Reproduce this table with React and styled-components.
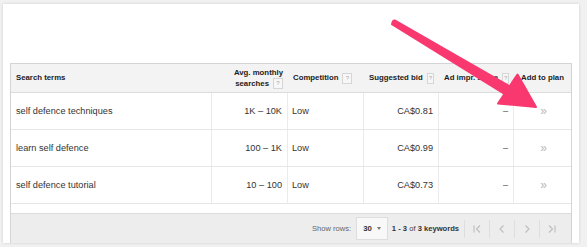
import React from "react";
import styled, { createGlobalStyle } from "styled-components";

const GlobalStyle = createGlobalStyle`
  body {
    margin: 0;
    background: #f1f1f1;
    font-family: "Liberation Sans", Arial, sans-serif;
  }
`;

const Page = styled.div`
  position: relative;
  width: 587px;
  height: 247px;
  padding: 4px 8px 4px 3px;
  box-sizing: border-box;
`;

const Card = styled.div`
  background: #ffffff;
  height: 100%;
  box-sizing: border-box;
  padding: 59px 7px 0 7px;
  box-shadow: 0 0 3px rgba(0, 0, 0, 0.14);
`;

const Table = styled.div`
  border: 1px solid #d4d4d4;
  border-bottom: none;
`;

const COLS = "201px 76px 76px 75px 75px 1fr";

const HeadRow = styled.div`
  display: grid;
  grid-template-columns: ${COLS};
  height: 28px;
  background: #f3f3f3;
  border-bottom: 1px solid #dcdcdc;
`;

const HeadCell = styled.div`
  display: flex;
  align-items: center;
  justify-content: ${(p) =>
    p.$align === "right" ? "flex-end" : p.$align === "center" ? "center" : "flex-start"};
  text-align: ${(p) => p.$align || "left"};
  padding: 0 5px;
  font-size: 7.8px;
  font-weight: bold;
  color: #222;
  line-height: 10px;
  white-space: nowrap;
`;

const Help = styled.span`
  display: inline-flex;
  align-items: center;
  justify-content: center;
  width: 8px;
  height: 9px;
  margin-left: 4px;
  border: 1px solid #d6d6d6;
  background: #f7f7f7;
  color: #aaa;
  font-size: 6px;
  font-weight: normal;
  vertical-align: middle;
`;

const Row = styled.div`
  display: grid;
  grid-template-columns: ${COLS};
  height: 36px;
  border-bottom: 1px solid #e6e6e6;
`;

const Cell = styled.div`
  display: flex;
  align-items: center;
  justify-content: ${(p) =>
    p.$align === "right" ? "flex-end" : p.$align === "center" ? "center" : "flex-start"};
  padding: 0 ${(p) => (p.$align === "right" ? "5px" : "4px")} 0 ${(p) => (p.$first ? "5px" : "4px")};
  font-size: 9.2px;
  color: ${(p) => p.$muted || "#333"};
  border-right: ${(p) => (p.$last ? "none" : "1px solid #ebebeb")};
`;

const Plan = styled.span`
  color: #b8b8b8;
  font-size: 12px;
  margin-left: 2px;
`;

const Spacer = styled.div`
  height: 9px;
`;

const Footer = styled.div`
  display: flex;
  align-items: center;
  justify-content: flex-end;
  height: 29px;
  background: #ededed;
  border-top: 1px solid #dcdcdc;
  padding-right: 7px;
  font-size: 7.6px;
  color: #666;
`;

const Select = styled.div`
  display: flex;
  align-items: center;
  gap: 5px;
  height: 21px;
  margin: 0 4px 0 5px;
  padding: 0 6px;
  background: #f8f8f8;
  border: 1px solid #dedede;
  color: #333;
  font-weight: bold;
  font-size: 7.8px;
`;

const Caret = styled.span`
  width: 0;
  height: 0;
  border-left: 2.5px solid transparent;
  border-right: 2.5px solid transparent;
  border-top: 3px solid #777;
`;

const Range = styled.span`
  color: #444;
  margin-right: 5px;
  b {
    color: #333;
  }
`;

const Pager = styled.div`
  display: flex;
  align-items: center;
`;

const PageButton = styled.div`
  width: 24px;
  height: 18px;
  display: flex;
  align-items: center;
  justify-content: center;
  border-left: 1px solid #dedede;
`;

const Arrow = styled.svg`
  position: absolute;
  left: 0;
  top: 0;
  pointer-events: none;
`;

const rows = [
  { term: "self defence techniques", searches: "1K – 10K", bid: "CA$0.81" },
  { term: "learn self defence", searches: "100 – 1K", bid: "CA$0.99" },
  { term: "self defence tutorial", searches: "10 – 100", bid: "CA$0.73" },
];

const PagerIcon = ({ d }) => (
  <svg width="12" height="12" viewBox="0 0 12 12">
    <path d={d} fill="none" stroke="#bdbdbd" strokeWidth="1.1" />
  </svg>
);

export default function App() {
  return (
    <Page>
      <GlobalStyle />
      <Card>
        <Table>
          <HeadRow>
            <HeadCell>Search terms</HeadCell>
            <HeadCell $align="right">
              <div>
                Avg. monthly
                <br />
                searches<Help>?</Help>
              </div>
            </HeadCell>
            <HeadCell>
              Competition<Help>?</Help>
            </HeadCell>
            <HeadCell $align="right">
              Suggested bid<Help>?</Help>
            </HeadCell>
            <HeadCell $align="right">
              Ad impr. share<Help>?</Help>
            </HeadCell>
            <HeadCell $align="center">Add to plan</HeadCell>
          </HeadRow>
          {rows.map((r) => (
            <Row key={r.term}>
              <Cell $first>{r.term}</Cell>
              <Cell $align="right">{r.searches}</Cell>
              <Cell>Low</Cell>
              <Cell $align="right">{r.bid}</Cell>
              <Cell $align="right" $muted="#555">–</Cell>
              <Cell $align="center" $last>
                <Plan>»</Plan>
              </Cell>
            </Row>
          ))}
          <Spacer />
          <Footer>
            Show rows:
            <Select>
              30 <Caret />
            </Select>
            <Range>
              <b>1 - 3</b> of <b>3 keywords</b>
            </Range>
            <Pager>
              <PageButton>
                <PagerIcon d="M3 2.5v7M9 2.5L5.5 6 9 9.5" />
              </PageButton>
              <PageButton>
                <PagerIcon d="M7.5 2.5L4 6l3.5 3.5" />
              </PageButton>
              <PageButton>
                <PagerIcon d="M4.5 2.5L8 6 4.5 9.5" />
              </PageButton>
              <PageButton>
                <PagerIcon d="M3 2.5L6.5 6 3 9.5M9 2.5v7" />
              </PageButton>
            </Pager>
          </Footer>
        </Table>
      </Card>
      <Arrow width="587" height="247" viewBox="0 0 587 247">
        {/* tapered shaft */}
        <path
          d="M391 24.8 Q391.5 19 395.2 19.6 L512 86.5 L506 96 Z"
          fill="#f8386f"
        />
        {/* head */}
        <path
          d="M536 107 L498 103.5 L517.5 74.5 Z"
          fill="#f8386f"
          stroke="#f8386f"
          strokeWidth="2"
          strokeLinejoin="round"
        />
      </Arrow>
    </Page>
  );
}
